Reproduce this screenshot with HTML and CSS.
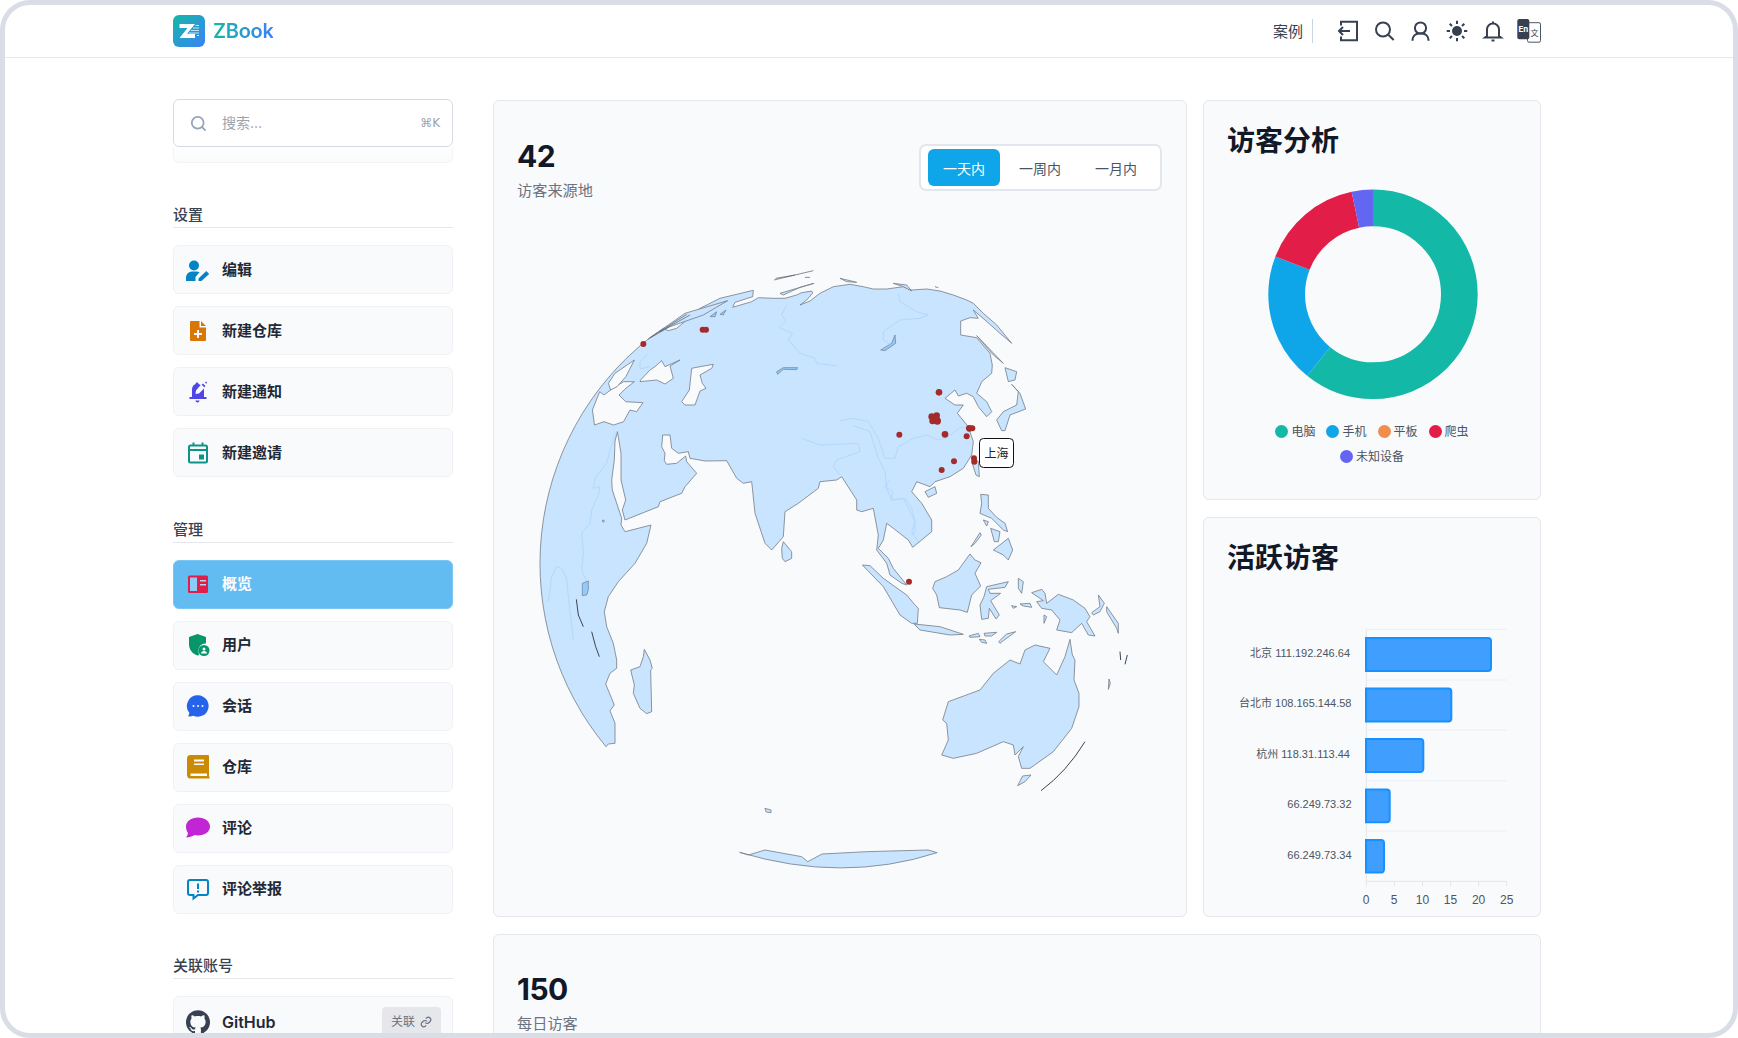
FILE: index.html
```html
<!DOCTYPE html>
<html lang="zh">
<head>
<meta charset="utf-8">
<title>ZBook</title>
<link rel="stylesheet" href="styles.css">
</head>
<body>
<div class="frame">
  <header class="topbar">
    <div class="brand">
      <svg class="logo" viewBox="0 0 32 32">
        <defs><linearGradient id="lg" x1="0" y1="0" x2="1" y2="1"><stop offset="0" stop-color="#14b8a6"/><stop offset="1" stop-color="#3b82f6"/></linearGradient></defs>
        <rect width="32" height="32" rx="6" fill="url(#lg)"/>
        <path d="M6.5 9H22L14 18.8H22V23H6.5L14.5 13H6.5z" fill="#fff"/>
        <path d="M18 15.5h8M20 13h6M22.5 10.5h3.5M16 18h10M24 20.5h2" stroke="#bfe3f7" stroke-width="1.2"/>
      </svg>
      <span class="brand-name">ZBook</span>
    </div>
    <div class="top-right">
      <span class="top-link">案例</span>
      <span class="top-sep"></span>
      <div class="top-icons">
        <svg class="tico" viewBox="0 0 24 24"><path d="M5 6.5V2.7H21V21.3H5V17.5M14 12H3M7 8L3 12L7 16"/></svg>
        <svg class="tico" viewBox="0 0 24 24"><circle cx="11" cy="10.5" r="7"/><path d="M16 15.5L21.7 21"/></svg>
        <svg class="tico" viewBox="0 0 24 24"><circle cx="12.5" cy="9" r="5.6"/><path d="M4.5 21.7v-.7a6.500 6.500 0 0 1 6.500-6.500h3a6.500 6.500 0 0 1 6.500 6.500v.7"/></svg>
        <svg class="tico" viewBox="0 0 24 24"><circle class="solid" cx="12" cy="12" r="5"/><path d="M12 1.700V5M12 19v3.300M1.700 12H5M19 12h3.300M4.700 4.700L7 7M17 17l2.300 2.300M4.700 19.300L7 17M17 7l2.300-2.300"/></svg>
        <svg class="tico" viewBox="0 0 24 24"><path d="M12 2.500v2M6 17v-6.500a6 6 0 0 1 12 0V17l2 1.500H4zM10.500 21.500h3"/></svg>
        <svg class="tico tr" viewBox="0 0 24 24"><rect class="tr-back" x="10.500" y="3.700" width="13" height="19.500" rx="1.500"/><rect class="solid nostroke" x="0.300" y="0" width="12" height="20.300" rx="2"/><text class="tr-en" x="6.300" y="12.500">En</text><text class="tr-zh" x="17.500" y="17">文</text></svg>
      </div>
    </div>
  </header>

  <div class="layout">
    <aside class="side">
      <div class="search">
        <svg class="search-ico" viewBox="0 0 24 24"><circle cx="11" cy="11" r="7.500"/><path d="M16.500 16.500L21 21"/></svg>
        <span class="search-ph">搜索...</span>
        <span class="search-key">⌘K</span>
      </div>
      <div class="search-ghost"></div>

      <section class="group">
        <h3 class="group-title">设置</h3>
        <div class="rows">
          <div class="row"><svg class="ico c-sky" viewBox="0 0 24 24"><circle cx="8" cy="7.500" r="5"/><path d="M0 23v-3.500a6 6 0 0 1 6-6h4.500a6 6 0 0 1 3 .8L9.500 19v4zM12.500 23v-2.600L20.300 13l2.900 2.900L15.400 23z"/></svg><span>编辑</span></div>
          <div class="row"><svg class="ico c-orange" viewBox="0 0 24 24"><path fill-rule="evenodd" d="M5 2h8.500v6.500H20V21a1 1 0 0 1-1 1H5a1 1 0 0 1-1-1V3a1 1 0 0 1 1-1zM11 11v3H8v2h3v3h2v-3h3v-2h-3v-3zM15 2l5 5h-5z"/></svg><span>新建仓库</span></div>
          <div class="row"><svg class="ico c-indigo" viewBox="0 0 24 24"><path d="M11 2.500c1 0 1.500.7 1.500 1.500 1 .2 1.600.6 2.200 1L10 10.500l-.5 3.500 3.500-.5 5-5v8.500h2.500v2H3.500v-2H6V9.500c0-3 1.800-5 3.600-5.500 0-.8.500-1.500 1.400-1.500zM9.500 20.500h4c0 1-1 2-2 2s-2-1-2-2zM17 3.500l2.500 2.500-1.300 1.300-2.500-2.500zM20 1.500l1.200 1.200-1 1L19 2.500z"/></svg><span>新建通知</span></div>
          <div class="row"><svg class="ico c-teal stroke" viewBox="0 0 24 24"><rect x="3" y="4.500" width="18" height="17" rx="1.500"/><path d="M3 9h18M7.500 1.500v3M16.500 1.500v3"/><rect class="solid-in" x="13" y="13.500" width="5" height="5"/></svg><span>新建邀请</span></div>
        </div>
      </section>

      <section class="group">
        <h3 class="group-title">管理</h3>
        <div class="rows">
          <div class="row active"><svg class="ico c-rose" viewBox="0 0 24 24"><rect x="2" y="3.500" width="20" height="17.500" rx="1.500"/><rect class="ov-panel" x="4" y="5.500" width="7" height="13.500"/><path class="ov-line" d="M14 8h6v1.600h-6zM14 12h6v1.600h-6z"/></svg><span>概览</span></div>
          <div class="row"><svg class="ico c-green" viewBox="0 0 24 24"><path d="M11.500 1l8.500 3v6.500c-3.500-.5-8 2.500-7.500 8 0 1.500.5 2.500 1 3.500-1 .3-1.500.5-2 .5-5-1.500-8.500-6-8.500-11V4z"/><circle cx="18" cy="17.500" r="5.500"/><circle class="in-w" cx="18" cy="16" r="1.500"/><path class="in-w" d="M15 20.500c0-1.500 1.300-2.500 3-2.500s3 1 3 2.500z"/></svg><span>用户</span></div>
          <div class="row"><svg class="ico c-blue" viewBox="0 0 24 24"><path d="M12 1.300a10.700 10.700 0 1 1-4.600 20.400c-1.500.7-4 .9-5.400.6.500-.5 1.200-1.700 1.300-3.600A10.700 10.700 0 0 1 12 1.300z"/><circle class="in-w" cx="7.500" cy="12" r="1"/><circle class="in-w" cx="12" cy="12" r="1"/><circle class="in-w" cx="16.500" cy="12" r="1"/></svg><span>会话</span></div>
          <div class="row"><svg class="ico c-amber" viewBox="0 0 24 24"><path d="M4.500 0H22a1 1 0 0 1 1 1v20l.6 1.300a.8.800 0 0 1-.7 1.200H4A3.500 3.500 0 0 1 1 20.500V3.500A3.500 3.500 0 0 1 4.500 0z"/><path class="in-w" d="M8 4.500h10v2H8zM8 8.500h10v1.500H8zM4.500 18.500H21v2.500H4.500z"/></svg><span>仓库</span></div>
          <div class="row"><svg class="ico c-fuchsia" viewBox="0 0 24 24"><path d="M12 1.500c6.600 0 12 3.800 12 9s-5.400 9-12 9c-1.200 0-2.300-.1-3.400-.4C6.500 20.800 3 21.500 0 21.500c1-1 1.800-2.500 2-4.400C.8 15.500 0 13.300 0 10.500c0-5.200 5.400-9 12-9z"/></svg><span>评论</span></div>
          <div class="row"><svg class="ico c-sky stroke" viewBox="0 0 24 24"><path d="M4 3h16a2 2 0 0 1 2 2v11a2 2 0 0 1-2 2H12l-4.500 3.500V18H4a2 2 0 0 1-2-2V5a2 2 0 0 1 2-2z"/><path d="M12 6.500v5.500M12 13.500v2"/></svg><span>评论举报</span></div>
        </div>
      </section>

      <section class="group">
        <h3 class="group-title">关联账号</h3>
        <div class="rows">
          <div class="row gh">
            <svg class="ico c-slate" viewBox="0 0 24 24"><path d="M12 .297c-6.630 0-12 5.373-12 12 0 5.303 3.438 9.800 8.205 11.385.6.113.82-.258.82-.577 0-.285-.01-1.040-.015-2.040-3.338.724-4.042-1.610-4.042-1.610C4.422 18.070 3.633 17.700 3.633 17.700c-1.087-.744.084-.729.084-.729 1.205.084 1.838 1.236 1.838 1.236 1.070 1.835 2.809 1.305 3.495.998.108-.776.417-1.305.76-1.605-2.665-.3-5.466-1.332-5.466-5.930 0-1.310.465-2.380 1.235-3.220-.135-.303-.54-1.523.105-3.176 0 0 1.005-.322 3.300 1.230.96-.267 1.980-.399 3-.405 1.020.006 2.040.138 3 .405 2.280-1.552 3.285-1.230 3.285-1.230.645 1.653.24 2.873.12 3.176.765.84 1.230 1.910 1.230 3.220 0 4.610-2.805 5.625-5.475 5.920.42.36.81 1.096.81 2.220 0 1.606-.015 2.896-.015 3.286 0 .315.21.69.825.57C20.565 22.092 24 17.592 24 12.297c0-6.627-5.373-12-12-12"/></svg>
            <span class="gh-name">GitHub</span>
            <span class="link-btn">关联<svg class="link-ico" viewBox="0 0 24 24"><path d="M10 13a5 5 0 0 0 7.500.5l3-3a5 5 0 0 0-7-7l-1.700 1.700"/><path d="M14 11a5 5 0 0 0-7.500-.5l-3 3a5 5 0 0 0 7 7l1.700-1.700"/></svg></span>
          </div>
        </div>
      </section>
    </aside>

    <main class="content">
      <div class="dash">
        <section class="card map-card">
          <div class="map-head">
            <div>
              <div class="stat">42</div>
              <div class="stat-sub">访客来源地</div>
            </div>
            <div class="seg">
              <span class="seg-btn on">一天内</span>
              <span class="seg-btn">一周内</span>
              <span class="seg-btn">一月内</span>
            </div>
          </div>
          <svg class="map" viewBox="494 231 692 685">
            <path class="land" d="M648.300 339L663.300 328.300L668.300 330.700L676.700 328.300L686.700 320L700 308.300L720 298.300L753.300 290.300L752.700 296.700L735 302.300L732.700 307.300L751.700 301.700L758.300 297.700L773.300 298.300L785 298.300L796.700 295L801.700 292.700L811.700 291L812.700 293L806.700 300L800 305L810 301L820 293.300L833.300 286.700L850 284.300L863.300 286.700L873.300 289L886.700 289L903.300 286.700L911.700 290L926.700 289L940 291L953.300 295L966.700 300L973.300 303.300L983.300 313.300L996.700 325L1011.700 343.300L1000 333.300L985 320L973.300 310L978.300 318.300L970 317.700L960.700 321L960.700 335L976.700 337.700L990 353.300L992.300 365L991.700 373.300L981.700 381.700L976.700 393.300L986.700 401.700L991.700 411.700L986.700 416.700L978.300 406.700L973.300 396.700L966.700 393.300L958.300 396L955 390L945 398.300L955 405L963.300 405L957.300 413.300L968.300 426.700L973.300 441.700L971.700 455L963.300 468.300L950 476.700L935 481.700L930 486.700L916.700 481.700L911.700 491.700L921.700 503.300L931.700 520L931.700 531.700L912.700 547.300L908.300 540L893.300 528.300L886.700 523.300L883.300 540L878.300 548.300L888.300 558.300L893.300 568.300L906.700 585L901.700 583.300L890 575L886.700 563.300L876.700 550L878.300 535L873.300 508.300L861.700 511.700L856.700 510L856.700 500L841.700 476.700L836.700 480L820 481.700L818.300 488.300L798.300 503.300L785 511.700L783.300 536.700L771.700 550L765 543.300L755 513.300L751.700 481.700L743.300 483.300L736.700 478.300L726.700 460.700L705 461L690 458.300L688.300 451.700L678.300 453.300L671.700 448.300L670 435L662.700 435L661.700 446.700L665 453.300L664.300 460.700L666.700 464.300L676.700 463.300L685.700 456L686.700 461.700L696.700 473.300L685 486.700L681.700 493.300L660 501.700L658.300 506.700L625 520L622.300 510L625.700 500L621 480L621 453.300L618.300 436.700L617.300 431.700L615 441.700L614.300 460L611.700 480L612.300 490L621.700 518.300L621 525L625 531.700L651 525L646.700 543.300L635 563.300L618.300 581.700L608.300 596.700L604.300 611.700L606.700 626.700L613.300 643.300L616.700 660L616.700 668.300L610 673.300L605.700 684L614.300 705L610 710.700L615 723.300L615 743.300L608.300 744L606 746.700A287 287 0 0 1 648.300 339z"/>
            <path class="hole" d="M599.700 391.700L604 395L615 386.700L623.600 381.700L634.400 381.700L625.800 388.300L619 395L625.800 401.700L643 402.700L636.600 411.700L630 410L623.600 421.700L613.600 425L604 421.700L594.500 425L592.400 410z"/>
            <path class="hole" d="M615 373.300L634.400 360L625.800 376.700L617 386.700L610.600 390L608.400 383.300z"/>
            <g transform="translate(620 265) scale(.33333)">
              <path class="hole" d="M62 345L90 315L105 305L125 287L135 305L180 285L150 303L160 340L135 357L110 345L60 350z"/>
              <path class="hole" d="M185 410L208 375L215 310L240 305L280 298L275 310L240 330L247 355L258 370L240 378L225 420L195 420z"/>
              <path class="land" d="M85 222L195 145L323 107L250 150L150 185z"/>
              <path class="thin" d="M90 218L200 148M120 200L210 150"/>
              <path class="lake" d="M270 155L290 140L285 155zM300 148L318 135L310 150z"/>
              <path class="thin" d="M462 45L580 17M467 40L525 30M555 37L570 37M945 65L955 68"/>
              <path class="land" d="M480 85L582 55L540 67L490 90zM660 40L690 47L710 52L680 50zM820 55L860 60L875 78L850 65z"/>
              <path class="land" d="M1175 358L1200 385L1217 432L1170 450L1155 497L1145 497L1130 465L1150 440L1190 420L1195 380zM1155 308L1190 320L1185 345L1165 350zM1070 212L1150 295L1120 270zM1055 590L1060 575L1075 590L1078 635L1068 630zM915 680L945 665L950 685L925 697z"/>
              <path class="lake" d="M782 255L815 235L825 210L827 235L795 257zM470 320L490 308L533 308L530 314L490 313L473 328z"/>
              <path class="river" d="M500 120L485 150L497 170L478 188L518 205L505 225L540 265L585 280L590 295L650 303M835 85L840 110L890 140L925 150L900 160L840 165L790 200L790 225L810 238M1050 488L1020 488L985 515L955 525L920 510L880 520L835 545L825 580L795 580L775 520L745 470L700 460L660 467M545 520L600 540L715 535L720 560L650 585L640 605L660 630M700 482L750 500L775 580L795 620L800 670L815 705L850 700L885 770L885 800L875 810M85 265L60 290L60 312L90 305"/>
            </g>
            <g transform="translate(535 430) scale(.33333)">
              <path class="river" d="M245 5L225 60L215 100L180 145L175 175L195 170L190 195L170 240L165 280L140 310L145 370L140 420L155 455M40 515L50 440L65 410L80 415L95 445L100 500L115 630"/>
              <path class="land" d="M745 335L770 365L770 385L750 395L742 385L740 355zM328 658L345 690L352 715L347 720L350 845L335 851L315 835L295 790L298 765L287 720L315 710L325 680z"/>
              <path class="lake" d="M142 460L160 453L160 480L155 495L142 497z"/>
              <path class="thin dark" d="M124 508L130 555L145 590M170 605L182 650L193 680"/>
              <circle class="lake" cx="205" cy="273" r="3"/>
            </g>
            <g transform="translate(840 480) scale(.33333)">
              <path class="land" d="M67 255L90 257L130 295L200 345L225 375L235 385L232 430L215 430L180 405L130 320zM222 432L300 440L370 463L330 465L240 450zM387 468L415 460L420 470L390 472zM432 460L470 457L455 468L435 468zM418 478L435 480L440 490L425 487zM476 485L500 462L527 455L490 482L480 490zM390 222L405 240L423 248L405 280L422 318L395 345L382 397L360 390L298 383L290 345L278 325L285 305L320 290L355 270zM440 320L505 305L495 322L445 328L450 340L482 340L452 362L478 405L468 417L448 385L445 415L425 418L420 375L432 350zM422 43L445 45L445 85L470 112L495 130L503 155L490 150L455 115L420 100L425 70zM460 210L505 175L518 210L505 240L490 225L470 215zM452 145L480 155L475 185L463 185zM393 200L420 158L424 165L405 190zM430 120L445 125L440 138zM535 295L550 305L545 340L535 325zM515 377L530 380L520 385zM540 372L570 370L575 382L550 378zM612 405L620 410L612 430zM575 338L605 328L615 340L620 370L655 343L700 360L735 385L750 410L740 425L765 468L745 465L725 430L695 458L650 450L660 420L635 390L605 385L590 365L610 362zM755 398L780 380L775 345L793 370L780 395L760 405zM800 380L835 430L835 460L830 445L800 395zM807 597L811 610L805 628zM533 917L548 888L573 885L555 905zM690 478L697 525L705 540L702 600L717 640L717 680L695 745L640 815L570 865L545 865L535 830L550 800L525 825L520 795L490 785L410 820L340 835L305 825L325 780L320 730L308 720L325 665L420 630L460 580L510 540L540 552L555 510L585 495L630 505L610 545L650 585L675 530z"/>
              <path class="river" d="M150 0L135 20L158 35L155 60L195 55L215 85L225 125L215 155L235 185"/>
              <path class="thin dark" d="M603 932Q680 875 735 785M840 515L842 540M862 525L855 553"/>
            </g>
            <g transform="translate(520 540) scale(.40816 .33333)">
              <path class="land" d="M538 937L560 945L600 930L690 950L705 965L740 942L850 935L1000 930L1022 938Q790 1030 538 937zM600 805L615 810L615 818L603 816z"/>
            </g>
            <g class="dots" transform="translate(620 265) scale(.33333)">
              <circle cx="70" cy="237" r="9"/><circle cx="248" cy="194" r="9"/><circle cx="258" cy="194" r="9"/>
              <circle cx="935" cy="455" r="10"/><circle cx="950" cy="452" r="10"/><circle cx="938" cy="468" r="10"/><circle cx="952" cy="468" r="11"/><circle cx="945" cy="460" r="11"/>
              <circle cx="957" cy="382" r="10"/><circle cx="838" cy="509" r="9"/><circle cx="975" cy="508" r="10"/><circle cx="1040" cy="514" r="9"/><circle cx="1048" cy="490" r="10"/><circle cx="1057" cy="490" r="9"/><circle cx="1062" cy="580" r="9"/><circle cx="1063" cy="590" r="9"/><circle cx="1002" cy="589" r="9"/><circle cx="965" cy="615" r="9"/>
            </g>
            <circle class="dot" cx="909" cy="581.700" r="3"/>
            <rect class="tip" x="979.500" y="438.500" width="34" height="29" rx="4"/>
            <text class="tip-text" x="996.500" y="457.500">上海</text>
          </svg>
        </section>

        <section class="card">
          <h2 class="card-title">访客分析</h2>
          <svg class="donut" viewBox="1204 185 336 220">
            <g transform="translate(1373 294.300) rotate(-90)">
              <circle class="seg-c s-teal" r="86.350" pathLength="360" stroke-dasharray="219 360"/>
              <circle class="seg-c s-sky" r="86.350" pathLength="360" stroke-dasharray="72.200 360" stroke-dashoffset="-219"/>
              <circle class="seg-c s-rose" r="86.350" pathLength="360" stroke-dasharray="57 360" stroke-dashoffset="-291.200"/>
              <circle class="seg-c s-indigo" r="86.350" pathLength="360" stroke-dasharray="11.800 360" stroke-dashoffset="-348.200"/>
            </g>
          </svg>
          <div class="legend">
            <span class="lg"><i class="lg-dot d-teal"></i>电脑</span>
            <span class="lg"><i class="lg-dot d-sky"></i>手机</span>
            <span class="lg"><i class="lg-dot d-orange"></i>平板</span>
            <span class="lg"><i class="lg-dot d-rose"></i>爬虫</span>
            <span class="lg"><i class="lg-dot d-indigo"></i>未知设备</span>
          </div>
        </section>

        <section class="card">
          <h2 class="card-title">活跃访客</h2>
          <svg class="bars" viewBox="1204 575.700 336 341">
            <path class="grid" d="M1366.300 630H1506.700M1366.300 680.700H1506.700M1366.300 730.700H1506.700M1366.300 781.300H1506.700M1366.300 831.700H1506.700"/>
            <path class="axis" d="M1366.300 630V887M1366.300 882H1506.700M1394.400 882v5M1422.500 882v5M1450.600 882v5M1478.600 882v5M1506.700 882v5"/>
            <path class="bar" d="M1366 638.700H1488a3 3 0 0 1 3 3V668.700a3 3 0 0 1-3 3H1366z"/>
            <path class="bar" d="M1366 689.300H1448.300a3 3 0 0 1 3 3V719.300a3 3 0 0 1-3 3H1366z"/>
            <path class="bar" d="M1366 739.700H1420.300a3 3 0 0 1 3 3V769.700a3 3 0 0 1-3 3H1366z"/>
            <path class="bar" d="M1366 790.300H1386.700a3 3 0 0 1 3 3V820a3 3 0 0 1-3 3H1366z"/>
            <path class="bar" d="M1366 840.700H1381a3 3 0 0 1 3 3V870.300a3 3 0 0 1-3 3H1366z"/>
            <text class="yl" x="1350" y="658">北京 111.192.246.64</text>
            <text class="yl" x="1351.500" y="708">台北市 108.165.144.58</text>
            <text class="yl" x="1350" y="759">杭州 118.31.113.44</text>
            <text class="yl" x="1351.500" y="809">66.249.73.32</text>
            <text class="yl" x="1351.500" y="860">66.249.73.34</text>
            <text class="xl" x="1366" y="905">0</text>
            <text class="xl" x="1394" y="905">5</text>
            <text class="xl" x="1422.500" y="905">10</text>
            <text class="xl" x="1450.500" y="905">15</text>
            <text class="xl" x="1478.600" y="905">20</text>
            <text class="xl" x="1506.700" y="905">25</text>
          </svg>
        </section>
      </div>

      <section class="card wide">
        <div class="stat">150</div>
        <div class="stat-sub">每日访客</div>
      </section>
    </main>
  </div>
</div>
</body>
</html>
```
FILE: styles.css
```css
* { box-sizing: border-box; }
html, body { margin: 0; padding: 0; background: #fff; }
body {
  width: 1738px;
  height: 1038px;
  overflow: hidden;
  font-family: Inter, "Noto Sans CJK SC", "DejaVu Sans", sans-serif;
  color: #111827;
}
.frame {
  width: 1738px;
  height: 1038px;
  border: 5px solid #d9dde6;
  border-radius: 30px;
  overflow: hidden;
  background: #fff;
}

/* top bar */
.topbar {
  height: 53px;
  border-bottom: 1px solid #e5e7eb;
  display: flex;
  align-items: center;
  justify-content: space-between;
  padding: 0 192px 0 168px;
}
.brand { display: flex; align-items: center; gap: 8px; }
.logo { width: 32px; height: 32px; display: block; }
.brand-name {
  font-size: 20px;
  font-weight: 600;
  letter-spacing: -.3px;
  background: linear-gradient(90deg, #14b8a6, #3b82f6);
  -webkit-background-clip: text;
  background-clip: text;
  color: transparent;
}
.top-right { display: flex; align-items: center; }
.top-link { font-size: 15px; line-height: 20px; color: #374151; padding-top: 1px; }
.top-sep { width: 1px; height: 24px; background: #cbd5e1; margin: 0 23px 0 9px; }
.top-icons { display: flex; gap: 12.2px; align-items: center; }
.tico {
  width: 24px;
  height: 24px;
  display: block;
  fill: none;
  stroke: #374151;
  stroke-width: 2;
  overflow: visible;
}
.tico .solid { fill: #374151; stroke: none; }
.tico .tr-back { fill: none; stroke: #4b5563; stroke-width: 1; }
.tr-en { font-size: 8px; font-weight: 700; fill: #fff; stroke: none; text-anchor: middle; }
.tr-zh { font-size: 8px; fill: #374151; stroke: none; text-anchor: middle; }

/* layout */
.layout {
  display: flex;
  gap: 40px;
  padding: 41px 0 0 168px;
}
.side { width: 280px; flex: none; }

.search {
  height: 48px;
  background: #fff;
  border: 1.5px solid #d5d9e2;
  border-radius: 6px;
  display: flex;
  align-items: center;
  padding: 0 12px 0 15px;
  gap: 14px;
}
.search-ico { width: 19px; height: 19px; fill: none; stroke: #94a3b8; stroke-width: 2.2; flex: none; }
.search-ph { font-size: 14px; line-height: 20px; color: #9ca3af; flex: 1; padding-bottom: 1px; }
.search-key { font-size: 12px; color: #9ca3af; font-family: "DejaVu Sans", sans-serif; }
.search-ghost {
  height: 15.5px;
  background: linear-gradient(#fff, #f9fafb);
  border: 1px solid #f1f3f6;
  border-top: 0;
  border-radius: 0 0 6px 6px;
}
.group { margin-top: 40.5px; }
.group-title {
  margin: 0 0 17px;
  height: 25px;
  font-size: 15px;
  line-height: 24px;
  font-weight: 500;
  color: #374151;
  border-bottom: 1px solid #e5e7eb;
}
.rows { display: flex; flex-direction: column; gap: 12px; }
.row {
  height: 49px;
  background: #f9fafb;
  border: 1px solid #f0f1f4;
  border-radius: 6px;
  display: flex;
  align-items: center;
  padding: 0 12px;
  gap: 12px;
  font-size: 15px;
  line-height: 22px;
  font-weight: 700;
  color: #1f2937;
}
.row.active { background: #62bbf1; border-color: #7cc6f3; color: #fff; }
.row.gh { height: 52px; padding-right: 11px; }
.gh-name { font-size: 16px; font-weight: 600; flex: 1; color: #1f2937; }
.link-btn {
  width: 59px;
  height: 30px;
  background: #e5e7eb;
  border-radius: 4px;
  font-size: 12px;
  font-weight: 400;
  color: #6b7280;
  display: flex;
  align-items: center;
  justify-content: center;
  gap: 5px;
}
.link-ico { width: 12px; height: 12px; fill: none; stroke: #6b7280; stroke-width: 2.4; }

.ico { width: 24px; height: 24px; flex: none; fill: currentColor; display: block; }
.ico.stroke { fill: none; stroke: currentColor; stroke-width: 2; }
.c-sky { color: #0284c7; }
.c-orange { color: #d97706; }
.c-indigo { color: #4f46e5; }
.c-teal { color: #0d9488; }
.c-rose { color: #e11d48; }
.c-green { color: #059669; }
.c-blue { color: #2563eb; }
.c-amber { color: #ca8a04; }
.c-fuchsia { color: #c026d3; }
.c-slate { color: #374151; }
.solid-in { fill: currentColor; stroke: none; }
.in-w { fill: #f9fafb; }
.ov-panel { fill: #8ccbf5; }
.ov-line { fill: #a9d8f6; }

/* main */
.content { width: 1048px; flex: none; padding-top: 1px; }
.dash {
  display: grid;
  grid-template-columns: 694px 338px;
  grid-template-rows: 399.5px 399.5px;
  column-gap: 16px;
  row-gap: 17.5px;
}
.card {
  background: #f9fafb;
  border: 1px solid #e5e7eb;
  border-radius: 6px;
}
.map-card { grid-row: 1 / 3; }
.map-head {
  height: 130px;
  padding: 37px 24px 0 23px;
  display: flex;
  justify-content: space-between;
  align-items: flex-start;
}
.stat { font-size: 30px; line-height: 36px; font-weight: 700; letter-spacing: -.5px; color: #111827; }
.stat-sub { margin-top: 6px; font-size: 15.2px; line-height: 22px; color: #6b7280; }
.seg {
  margin-top: 6px;
  height: 47px;
  width: 243px;
  background: #fff;
  border: 2px solid #e2e6ee;
  border-radius: 7px;
  padding: 3px 7px;
  display: flex;
  gap: 4px;
}
.seg-btn {
  width: 72px;
  font-size: 14px;
  color: #4b5563;
  display: flex;
  align-items: center;
  justify-content: center;
  border-radius: 6px;
}
.seg-btn.on { background: #0ea5e9; color: #fff; }

.map { display: block; width: 692px; height: 685px; }
.land {
  fill: #c9e4ff;
  stroke: #737b86;
  stroke-width: .8;
  stroke-linejoin: round;
  vector-effect: non-scaling-stroke;
}
.hole {
  fill: #f9fafb;
  stroke: #737b86;
  stroke-width: .8;
  stroke-linejoin: round;
  vector-effect: non-scaling-stroke;
}
.lake {
  fill: #93c9fb;
  stroke: #6f7f90;
  stroke-width: .7;
  vector-effect: non-scaling-stroke;
}
.river {
  fill: none;
  stroke: #b2d8fc;
  stroke-width: 1;
  vector-effect: non-scaling-stroke;
}
.thin {
  fill: none;
  stroke: #555c66;
  stroke-width: .7;
  vector-effect: non-scaling-stroke;
}
.thin.dark { stroke: #3b4552; stroke-width: 1; }
.dots circle, .dot { fill: #a52a2a; }
.tip { fill: #fff; stroke: #111; stroke-width: 1; }
.tip-text { font-size: 12px; fill: #222; text-anchor: middle; }

.card-title {
  margin: 0;
  padding: 23px 0 0 23px;
  font-size: 28px;
  line-height: 34px;
  font-weight: 700;
  color: #111827;
}
.donut { display: block; width: 336px; height: 220px; margin-top: 27px; }
.seg-c { fill: none; stroke-width: 36.7; }
.s-teal { stroke: #14b8a6; }
.s-sky { stroke: #0ea5e9; }
.s-rose { stroke: #e11d48; }
.s-indigo { stroke: #6366f1; }

.legend {
  margin: 18px auto 0;
  width: 230px;
  display: flex;
  flex-wrap: wrap;
  justify-content: center;
  column-gap: 11px;
  row-gap: 8px;
}
.lg {
  display: flex;
  align-items: center;
  gap: 3px;
  font-size: 12px;
  line-height: 17px;
  color: #4b5563;
}
.lg-dot { width: 13px; height: 13px; border-radius: 50%; display: block; }
.d-teal { background: #14b8a6; }
.d-sky { background: #0ea5e9; }
.d-orange { background: #f28e4b; }
.d-rose { background: #e11d48; }
.d-indigo { background: #6366f1; }

.bars { display: block; width: 336px; height: 341px; }
.grid { fill: none; stroke: #eceef3; stroke-width: 1; }
.axis { fill: none; stroke: #e2e5ea; stroke-width: 1; }
.bar { fill: #409eff; stroke: #1890ff; stroke-width: 2; }
.yl { font-family: "Liberation Sans", "Noto Sans CJK SC", sans-serif; font-size: 11px; fill: #4b5563; text-anchor: end; }
.xl { font-family: "Liberation Sans", sans-serif; font-size: 12px; fill: #4b5563; text-anchor: middle; }

.wide {
  margin-top: 17.5px;
  height: 200px;
  padding: 36px 23px 0;
}
```
